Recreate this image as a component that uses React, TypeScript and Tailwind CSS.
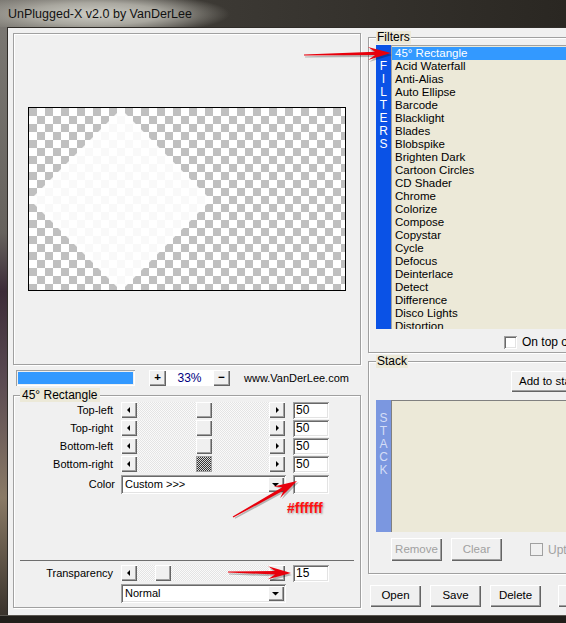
import React from "react";

const filters = [
  "45° Rectangle",
  "Acid Waterfall",
  "Anti-Alias",
  "Auto Ellipse",
  "Barcode",
  "Blacklight",
  "Blades",
  "Blobspike",
  "Brighten Dark",
  "Cartoon Circles",
  "CD Shader",
  "Chrome",
  "Colorize",
  "Compose",
  "Copystar",
  "Cycle",
  "Defocus",
  "Deinterlace",
  "Detect",
  "Difference",
  "Disco Lights",
  "Distortion",
];

const raised =
  "bg-[#f0f0f0] shadow-[inset_1px_1px_#fff,inset_-1px_-1px_#646464,inset_-2px_-2px_#a0a0a0]";
const sunken =
  "bg-white shadow-[inset_1px_1px_#a0a0a0,inset_-1px_-1px_#fff,inset_2px_2px_#696969,inset_-2px_-2px_#e3e3e3]";
const etched = "border border-[#a0a0a0] shadow-[inset_1px_1px_#fff,1px_1px_#fff]";

function ArrowBtn({ dir, h = 16 }: { dir: "left" | "right" | "down"; h?: number }) {
  const pts =
    dir === "left" ? "9,5 6,8 9,11" : dir === "right" ? "7,5 10,8 7,11" : "4,6 11,6 7.5,9.5";
  return (
    <div className={`w-[16px] shrink-0 ${h === 16 ? "h-[16px]" : "h-[15px]"} ${raised}`}>
      <svg width="16" height={h} viewBox={`0 0 16 ${h}`}>
        <polygon points={pts} fill="#000" />
      </svg>
    </div>
  );
}

function Slider({ thumb, focus }: { thumb: string; focus?: boolean }) {
  return (
    <div className="flex h-[16px] w-[164px] shrink-0">
      <ArrowBtn dir="left" />
      <div className="flex flex-1 bg-[conic-gradient(#e4e4e4_25%,#fafafa_0_50%,#e4e4e4_0_75%,#fafafa_0)] bg-[length:2px_2px]">
        {focus ? (
          <div
            className={`h-[16px] w-[16px] ${thumb} border border-[#a0a0a0] bg-[conic-gradient(#333_25%,#d8d8d8_0_50%,#333_0_75%,#d8d8d8_0)] bg-[length:2px_2px]`}
          />
        ) : (
          <div className={`h-[16px] w-[16px] ${thumb} ${raised}`} />
        )}
      </div>
      <ArrowBtn dir="right" />
    </div>
  );
}

function Combo({ text }: { text: string }) {
  return (
    <div className={`flex h-[19px] w-[165px] shrink-0 items-center pl-[4px] pr-[2px] ${sunken}`}>
      <span className="flex-1 text-[11px] leading-[15px]">{text}</span>
      <ArrowBtn dir="down" h={15} />
    </div>
  );
}

function Edit({ value }: { value: string }) {
  return (
    <div className={`ml-[8px] h-[17px] w-[36px] shrink-0 pl-[3px] text-[12px] leading-[17px] ${sunken}`}>
      {value}
    </div>
  );
}

function SliderRow({ label, thumb, value, focus }: { label: string; thumb: string; value: string; focus?: boolean }) {
  return (
    <div className="flex h-[16px] items-center">
      <div className="w-[100px] shrink-0 pr-[1px] text-right">{label}</div>
      <div className="ml-[7px]">
        <Slider thumb={thumb} focus={focus} />
      </div>
      <Edit value={value} />
    </div>
  );
}

function Btn({ children, className = "", disabled }: { children: React.ReactNode; className?: string; disabled?: boolean }) {
  return (
    <div
      className={`flex shrink-0 items-center justify-center whitespace-nowrap text-[11.5px] ${raised} ${disabled ? "text-[#a0a0a0]" : "text-black"} ${className}`}
    >
      {children}
    </div>
  );
}

function RedArrow({ x1, y1, x2, y2 }: { x1: number; y1: number; x2: number; y2: number }) {
  const len = Math.hypot(x2 - x1, y2 - y1);
  const deg = (Math.atan2(y2 - y1, x2 - x1) * 180) / Math.PI;
  const pts = `0,-0.6 ${len - 16},-1.7 ${len - 23},-6.5 ${len},0 ${len - 23},6.5 ${len - 16},1.7 0,0.6`;
  return (
    <g transform={`translate(${x1} ${y1}) rotate(${deg})`}>
      <polygon points={pts} fill="#000" opacity="0.25" transform="translate(1 2)" />
      <polygon points={pts} fill="#e8000c" />
    </g>
  );
}

export default function App() {
  return (
    <div className="relative flex h-[623px] w-[566px] flex-col overflow-hidden bg-[#26231f] font-['Liberation_Sans',Arial,sans-serif] text-[11px] text-black">
      {/* title bar */}
      <div className="h-[27px] shrink-0 bg-[radial-gradient(ellipse_135px_22px_at_95px_14px,#cdcdc5_0%,#a9a79f_50%,transparent_100%),linear-gradient(to_right,#77746e,#3d3a35_35%,#2a2722)]">
        <div className="pl-[8px] font-['Liberation_Sans',sans-serif] text-[12.5px] leading-[28px] text-[#111]">
          UnPlugged-X v2.0 by VanDerLee
        </div>
      </div>

      <div className="flex h-[588px] shrink-0">
        {/* left window frame */}
        <div className="w-[7px] shrink-0 bg-[linear-gradient(to_bottom,#7a7772,#66625d_35%,#3c2c38_45%,#5a4a52_60%,#8a7a66_80%,#3a332c)]" />

        {/* client area */}
        <div className="flex flex-1 items-start border-l border-t border-[#2f2c28] bg-[#f0f0f0]">
          {/* left column */}
          <div className="ml-[5px] flex w-[348px] shrink-0 flex-col">
            <div className={`mt-[5px] flex h-[332px] items-center justify-center ${etched}`}>
              <div className="h-[184px] w-[318px] border border-black bg-[conic-gradient(#fff_25%,#c0c0c0_0_50%,#fff_0_75%,#c0c0c0_0)] bg-[length:16px_16px]">
                <svg width="316" height="182" viewBox="0 0 316 182">
                  <polygon points="1,92 92,1 182,92 92,183" fill="#fff" opacity="0.9" />
                </svg>
              </div>
            </div>

            <div className="mt-[5px] flex h-[16px] items-center">
              <div className="ml-[3px] h-[16px] w-[119px] p-[2px] shadow-[inset_1px_1px_#a0a0a0,inset_-1px_-1px_#fff]">
                <div className="h-full w-full bg-[#3399ff]" />
              </div>
              <Btn className="ml-[14px] h-[16px] w-[17px] font-bold">+</Btn>
              <div className="flex h-[16px] w-[47px] items-center justify-center bg-white text-[12px] text-[#000080]">
                33%
              </div>
              <Btn className="h-[16px] w-[17px] font-bold">−</Btn>
              <div className="ml-[14px] text-[11px]">www.VanDerLee.com</div>
            </div>

            {/* 45° Rectangle group */}
            <div className={`relative mt-[9px] flex h-[213px] flex-col pt-[6px] ${etched}`}>
              <div className="absolute -top-[8px] left-[6px] bg-[#ece9d8] px-[2px] text-[12px] leading-[14px]">
                45° Rectangle
              </div>
              <div className="flex flex-col gap-[2px]">
                <SliderRow label="Top-left" thumb="ml-[59px]" value="50" />
                <SliderRow label="Top-right" thumb="ml-[59px]" value="50" />
                <SliderRow label="Bottom-left" thumb="ml-[59px]" value="50" />
                <SliderRow label="Bottom-right" thumb="ml-[59px]" value="50" focus />
              </div>
              <div className="mt-[3px] flex h-[19px] items-center">
                <div className="w-[102px] shrink-0 pr-[1px] text-right">Color</div>
                <div className="ml-[5px]">
                  <Combo text="Custom >>>" />
                </div>
                <div className={`ml-[7px] h-[19px] w-[36px] ${sunken}`} />
              </div>

              <div className="mx-[6px] mt-[66px] h-[2px] border-t border-[#6e6e6e] border-b-white" />

              <div className="mt-[3px]">
                <SliderRow label="Transparency" thumb="ml-[18px]" value="15" />
              </div>
              <div className="mt-[3px] flex">
                <div className="ml-[107px]">
                  <Combo text="Normal" />
                </div>
              </div>
            </div>
          </div>

          {/* right column */}
          <div className="ml-[7px] flex w-[240px] shrink-0 flex-col">
            {/* Filters group */}
            <div className={`relative mt-[9px] flex h-[316px] flex-col pl-[7px] pt-[7px] ${etched}`}>
              <div className="absolute -top-[7px] left-[7px] bg-[#ece9d8] px-[1px] text-[12px] leading-[13px]">
                Filters
              </div>
              <div className="flex h-[284px]">
                <div className="flex w-[15px] shrink-0 flex-col items-center bg-[#0a52e6] pt-[15px] text-[12px] leading-[13px] text-white">
                  {"FILTERS".split("").map((c, i) => (
                    <span key={i}>{c}</span>
                  ))}
                </div>
                <div className="flex flex-1 flex-col overflow-hidden border-l border-t border-[#a0a0a0] bg-[#ece9d8] pt-[1px]">
                  {filters.map((f, i) => (
                    <div
                      key={f}
                      className={`h-[13px] shrink-0 whitespace-nowrap pl-[3px] text-[11.5px] leading-[13px] ${i === 0 ? "bg-[#3399ff] text-white" : ""}`}
                    >
                      {f}
                    </div>
                  ))}
                </div>
              </div>
              <div className="mt-[4px] flex items-center whitespace-nowrap">
                <div className={`ml-[128px] h-[13px] w-[13px] shrink-0 ${sunken}`} />
                <span className="ml-[5px] text-[12px]">On top of others</span>
              </div>
            </div>

            {/* Stack group */}
            <div className={`relative mt-[8px] flex h-[213px] flex-col pl-[7px] pt-[9px] ${etched}`}>
              <div className="absolute -top-[7px] left-[7px] bg-[#ece9d8] px-[1px] text-[12px] leading-[13px]">
                Stack
              </div>
              <Btn className="ml-[135px] h-[21px] w-[90px] justify-start pl-[8px]">Add to stack</Btn>
              <div className="mt-[8px] flex h-[132px]">
                <div className="flex w-[15px] shrink-0 flex-col items-center bg-[#7b97e0] pt-[12px] text-[12px] leading-[13px] text-[#d4ddf6]">
                  {"STACK".split("").map((c, i) => (
                    <span key={i}>{c}</span>
                  ))}
                </div>
                <div className="flex-1 border-l border-t border-[#808080] bg-[#ece9d8]" />
              </div>
              <div className="mt-[6px] flex items-center whitespace-nowrap">
                <Btn disabled className="ml-[15px] h-[23px] w-[51px]">Remove</Btn>
                <Btn disabled className="ml-[9px] h-[23px] w-[51px]">Clear</Btn>
                <div className="ml-[28px] h-[13px] w-[13px] shrink-0 border border-[#a0a0a0] bg-[#f0f0f0]" />
                <span className="ml-[5px] text-[12px] text-[#a0a0a0]">Uptodate</span>
              </div>
            </div>

            <div className="mt-[11px] flex">
              <Btn className="ml-[2px] h-[22px] w-[51px]">Open</Btn>
              <Btn className="ml-[9px] h-[22px] w-[51px]">Save</Btn>
              <Btn className="ml-[9px] h-[22px] w-[51px]">Delete</Btn>
              <Btn className="ml-[17px] h-[22px] w-[51px]">Close</Btn>
            </div>
          </div>
        </div>
      </div>

      {/* bottom window frame */}
      <div className="h-[8px] shrink-0 border-t border-[#5a5650] bg-[#211e1a]" />

      {/* annotations */}
      <svg className="pointer-events-none absolute left-0 top-0" width="566" height="623">
        <RedArrow x1={304} y1={55} x2={391} y2={53} />
        <RedArrow x1={233} y1={517} x2={297} y2={481} />
        <RedArrow x1={228} y1={572} x2={291} y2={573} />
      </svg>
      <div className="absolute left-[287px] top-[498px] text-[14px] font-bold text-[#ff1010] [text-shadow:1px_1px_2px_rgba(0,0,0,0.35)]">
        #ffffff
      </div>
    </div>
  );
}
